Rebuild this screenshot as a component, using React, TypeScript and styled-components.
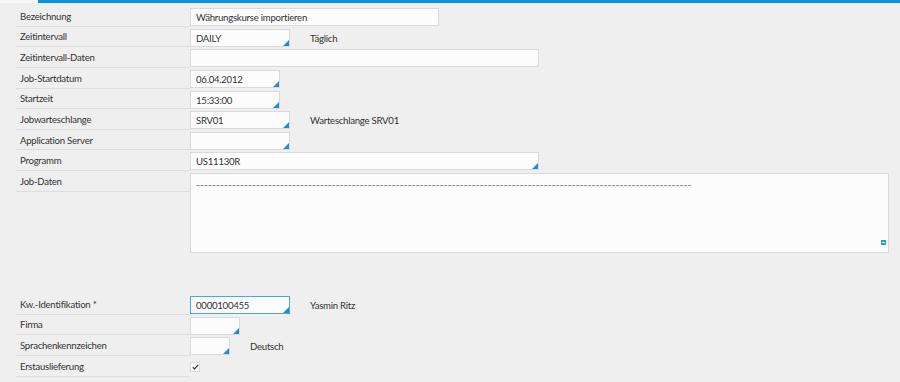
import React from "react";
import styled, { createGlobalStyle } from "styled-components";

const GlobalStyle = createGlobalStyle`
	html, body {
		margin: 0;
		padding: 0;
		background: #efefef;
	}
	body {
		font-family: Lato, "Liberation Sans", sans-serif;
		font-size: 9.6px;
		letter-spacing: -0.25px;
		color: #333;
	}
`;

const Page = styled.div`
	width: 900px;
	height: 382px;
	overflow: hidden;
	background: #efefef;
`;

const TopBar = styled.div`
	display: flex;
	height: 3px;
`;

const TabStub = styled.div`
	width: 38px;
	background: #f8f8f8;
`;

const Accent = styled.div`
	flex: 1;
	background: #0a93da;
`;

const Form = styled.div`
	padding: 3px 12px 0 16px;
`;

const Row = styled.div`
	display: grid;
	grid-template-columns: 174px 1fr;
	align-items: start;
`;

const LabelCell = styled.div`
	box-sizing: border-box;
	height: 20.625px;
	padding: 1px 0 0 4px;
	border-bottom: 1px solid #dedede;
	display: flex;
	align-items: center;
	white-space: nowrap;
`;

const FieldCell = styled.div`
	display: flex;
	align-items: center;
	padding-top: 2px;
`;

const InputBox = styled.div<{ $width: number; $help?: boolean; $focused?: boolean }>`
	position: relative;
	box-sizing: border-box;
	width: ${(p) => p.$width}px;
	height: 18px;
	padding: 1px 5px 0;
	display: flex;
	align-items: center;
	background: #fcfcfc;
	border: 1px solid ${(p) => (p.$focused ? "#4fa6dc" : "#dadada")};
	white-space: nowrap;

	&::after {
		content: "";
		display: ${(p) => (p.$help ? "block" : "none")};
		position: absolute;
		right: 0;
		bottom: 0;
		width: 0;
		height: 0;
		border-left: 6px solid transparent;
		border-bottom: 6px solid #1a8ed6;
	}
`;

const Description = styled.span`
	margin-left: 20px;
	padding-top: 1px;
	white-space: nowrap;
`;

const TextArea = styled.div`
	position: relative;
	box-sizing: border-box;
	width: 699px;
	height: 80px;
	padding: 4px 5px 0;
	background: #fcfcfc;
	border: 1px solid #dadada;
	line-height: 14px;
`;

const Dashes = styled.span`
	font-family: "Liberation Sans", sans-serif;
	font-size: 12px;
	letter-spacing: 0;
	color: #8e8e8e;
`;

const ResizeHandle = styled.div`
	position: absolute;
	right: 2px;
	bottom: 7px;
	width: 5px;
	height: 5px;
	background: #2d9be0;

	&::after {
		content: "";
		position: absolute;
		left: 1px;
		right: 1px;
		top: 2px;
		height: 1px;
		background: #d9eefa;
	}
`;

const Spacer = styled.div`
	height: 41px;
`;

const CheckBox = styled.div`
	box-sizing: border-box;
	width: 10px;
	height: 10px;
	margin-top: 4px;
	background: #fbfbfb;
	border: 1px solid #dcdcdc;
	display: flex;
	align-items: center;
	justify-content: center;
`;

interface FieldRowProps {
	label: string;
	value?: string;
	width: number;
	help?: boolean;
	focused?: boolean;
	description?: string;
}

function FieldRow({ label, value, width, help, focused, description }: FieldRowProps) {
	return (
		<Row>
			<LabelCell>{label}</LabelCell>
			<FieldCell>
				<InputBox $width={width} $help={help} $focused={focused}>
					{value}
				</InputBox>
				{description && <Description>{description}</Description>}
			</FieldCell>
		</Row>
	);
}

export default function App() {
	return (
		<Page>
			<GlobalStyle />
			<TopBar>
				<TabStub />
				<Accent />
			</TopBar>
			<Form>
				<FieldRow label="Bezeichnung" value="Währungskurse importieren" width={249} />
				<FieldRow label="Zeitintervall" value="DAILY" width={100} help description="Täglich" />
				<FieldRow label="Zeitintervall-Daten" width={349} />
				<FieldRow label="Job-Startdatum" value="06.04.2012" width={90} help />
				<FieldRow label="Startzeit" value="15:33:00" width={90} help />
				<FieldRow label="Jobwarteschlange" value="SRV01" width={100} help description="Warteschlange SRV01" />
				<FieldRow label="Application Server" width={100} help />
				<FieldRow label="Programm" value="US11130R" width={349} help />
				<Row>
					<LabelCell>Job-Daten</LabelCell>
					<FieldCell>
						<TextArea>
							<Dashes>{"-".repeat(124)}</Dashes>
							<ResizeHandle />
						</TextArea>
					</FieldCell>
				</Row>

				<Spacer />

				<FieldRow label="Kw.-Identifikation *" value="0000100455" width={100} help focused description="Yasmin Ritz" />
				<FieldRow label="Firma" width={50} help />
				<FieldRow label="Sprachenkennzeichen" width={40} help description="Deutsch" />
				<Row>
					<LabelCell>Erstauslieferung</LabelCell>
					<FieldCell>
						<CheckBox>
							<svg width="7" height="6" viewBox="0 0 7 6">
								<path d="M0.8 3.2 L2.6 4.9 L6.2 0.9" fill="none" stroke="#333" strokeWidth="1.2" />
							</svg>
						</CheckBox>
					</FieldCell>
				</Row>
			</Form>
		</Page>
	);
}
